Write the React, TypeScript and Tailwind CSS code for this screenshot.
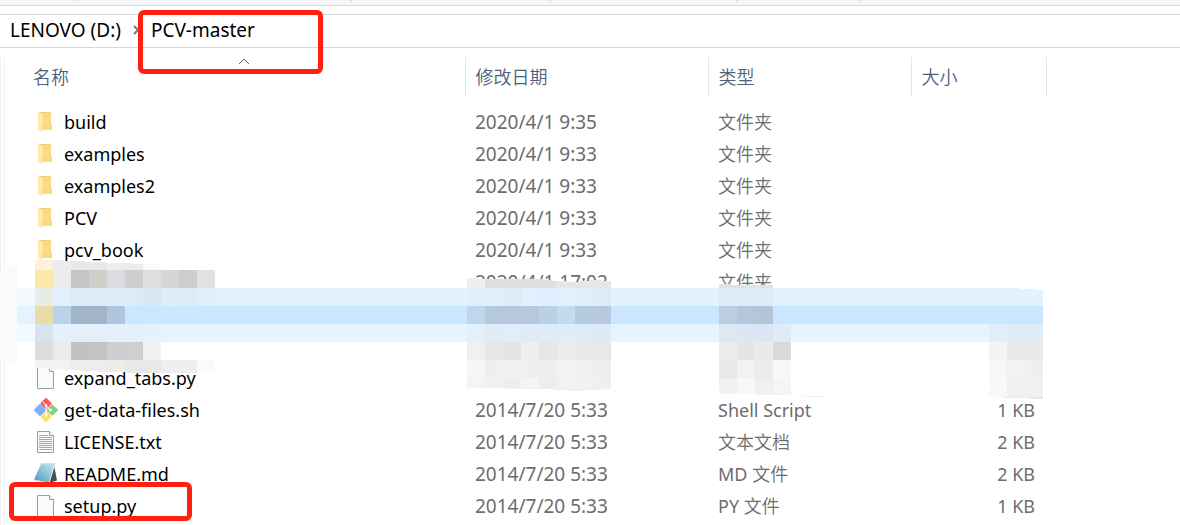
type IconKind = 'folder' | 'blank' | 'text' | 'git' | 'notepad' | 'none';

type FileRow = {
  id: number;
  icon: IconKind;
  name: string;
  date: string;
  type: string;
  size: string;
};

const rows: FileRow[] = [
  { id: 1, icon: 'folder', name: 'build', date: '2020/4/1 9:35', type: '文件夹', size: '' },
  { id: 2, icon: 'folder', name: 'examples', date: '2020/4/1 9:33', type: '文件夹', size: '' },
  { id: 3, icon: 'folder', name: 'examples2', date: '2020/4/1 9:33', type: '文件夹', size: '' },
  { id: 4, icon: 'folder', name: 'PCV', date: '2020/4/1 9:33', type: '文件夹', size: '' },
  { id: 5, icon: 'folder', name: 'pcv_book', date: '2020/4/1 9:33', type: '文件夹', size: '' },
  { id: 6, icon: 'none', name: '', date: '2020/4/1 17:02', type: '文件夹', size: '' },
  { id: 7, icon: 'none', name: '', date: '', type: '', size: '' },
  { id: 8, icon: 'none', name: '', date: '', type: '', size: '' },
  { id: 9, icon: 'blank', name: 'expand_tabs.py', date: '', type: '', size: '' },
  { id: 10, icon: 'git', name: 'get-data-files.sh', date: '2014/7/20 5:33', type: 'Shell Script', size: '1 KB' },
  { id: 11, icon: 'text', name: 'LICENSE.txt', date: '2014/7/20 5:33', type: '文本文档', size: '2 KB' },
  { id: 12, icon: 'notepad', name: 'README.md', date: '2014/7/20 5:33', type: 'MD 文件', size: '2 KB' },
  { id: 13, icon: 'blank', name: 'setup.py', date: '2014/7/20 5:33', type: 'PY 文件', size: '1 KB' },
];

// pixelated strips: x, y, height, then one colour per 18px cell
const strips: [number, number, number, string][] = [
  [35, 270, 18, 'fce7ab eeecea c3c6c5 d0cec9 dadce0 cfcecc dddedf d5d6d8 cbcecd e1e1e1'],
  [17, 288, 18, 'f2f9ff e7ede4 e0f0fe deebf7 deebf7 deebf8 dcebf7 d9e7f4 dfedf9 dcebf8 e0effb'],
  [17, 306, 18, 'e5f2ff e9dca8 bbd2e8 a0b5cc a0b5cc b0c6de'],
  [17, 324, 18, 'f2f9ff d8e4ed e2f1fc e3f0fa e3f0fa e4f1fc e4f0fc e5f1fd'],
  [35, 342, 18, 'dcdddd ecebe9 c2c2c2 c4c3c2 cccecf cfcfcf eff1f3'],
  [467, 288, 18, 'e0effb e0effb dcecf6 e2effd e0eefe e1f0fd e1effc dcecf6'],
  [467, 306, 18, 'bdd8ec b4cadc b5c8dc b4c8e0 b9d0e6 c3daf1 b5cce0 b5cae0'],
  [467, 324, 18, 'e1f0fa e0edf7 e0edfb dfecf7 dfecf9 dfecfa deebf8 dce9f8'],
  [467, 342, 18, 'f0f0f0 e9e7e5 e3e4e6 edefed e6e6e6 eeecea eaeaea e7e9e8'],
  [467, 360, 18, 'f6f6f6 f1eeeb f0f1f5 efefef eeeeee f2f2f2 f0f0f0 efefef'],
  [467, 378, 10, 'f4f4f4 f2f0ee eeeeee f3f5f4 ededed f2f2f2 f2f2f2 efefef'],
  [719, 288, 18, 'deecf8 deecf8 deecf8'],
  [719, 306, 18, 'b9cde3 b2c7dc b2c6da'],
  [719, 324, 18, 'dce9f3 dbe8f3 dae6f5 dfecf5'],
  [719, 342, 18, 'ebebeb e5e5e5 eaeaea d9d9d9'],
  [719, 360, 18, 'e8e8e6 f2f2f2 ececec f8f8f8'],
  [719, 378, 16, 'eff2f1 f7f7f4 eef1f0 f5f5f5'],
  [989, 324, 18, 'e1edfc dfecf8 dfecf5'],
  [989, 342, 18, 'f4f4f4 e9e9e9 e9e9e9'],
  [989, 360, 18, 'f7f7f7 f2f2f2 efefef'],
  [989, 378, 19, 'f9f9f9 f0f0f0 f0f0f0'],
];

function Mosaic() {
  return (
    <svg
      className="absolute left-0 top-0 pointer-events-none"
      width="1060"
      height="410"
      viewBox="0 0 1060 410"
      shapeRendering="crispEdges"
      aria-hidden="true"
    >
      <path d="M0 274C3 269 9 266 17 264V365C10 363 4 360 0 356Z" fill="#fafafa" />
      {/* torn upper and lower edges */}
      <path d="M35 260H53V270H35Z" fill="#fff2dc" />
      <path d="M53 260L95 262L143 264V270H53Z" fill="#ebeced" />
      <path d="M71 261L95 262L107 263V270H71Z" fill="#e7e9e9" />
      <path d="M143 264H161V270H143Z" fill="#f9fafa" />
      <path d="M35 360H71V370L35 368Z" fill="#f2f2f2" />
      <path d="M71 360H107V372L71 370Z" fill="#ededed" />
      <path d="M107 360H125V372H107Z" fill="#efebe6" />
      <path d="M125 360H161V373H125Z" fill="#e8e8e8" />
      <path d="M161 360H197V373H161Z" fill="#eeeeee" />
      <path d="M197 360H215V373H197Z" fill="#fafafa" />
      <path d="M467 278L485 279V288H467Z" fill="#efefef" />
      <path d="M485 279H539L557 281V288H485Z" fill="#e0e0e0" />
      <path d="M557 281L575 282L593 280L611 281V288H557Z" fill="#e6e6e6" />
      <path d="M719 284L745 285H773V288H719Z" fill="#e2e2e2" />
      <path d="M467 388H611V389L575 391L545 389Z" fill="#f0f0f0" />
      <path d="M989 397H1043V399Z" fill="#e8e8e8" />
      <path d="M745 394H791V395H770Z" fill="#f2f2f2" />
      <path d="M801 396H827V397H801Z" fill="#f2f2f2" />
      {/* highlighted row */}
      <path d="M17 288H1012L1043 290V306H17Z" fill="#e4f2fe" />
      <path d="M17 306H1043V324H17Z" fill="#cbe7ff" />
      <path d="M17 324H1043V342H17Z" fill="#e7f3ff" />
      {strips.map(([x, y, h, colours]) =>
        colours.split(' ').map((c, i) => (
          <rect key={`${x}-${y}-${i}`} x={x + i * 18} y={y} width="18" height={h} fill={`#${c}`} />
        )),
      )}
    </svg>
  );
}

function FileIcon({ kind }: { kind: IconKind }) {
  if (kind === 'none') return null;
  return (
    <svg className="shrink-0 overflow-visible" width="24" height="24" viewBox="0 0 24 24" aria-hidden="true">
      {kind === 'folder' && (
        <>
          <path d="M5 2H18V14L19 15V20H9V4Z" fill="#f0cb74" />
          <path d="M10 3H18V14L19 15V20H9.5V17Z" fill="#f8d984" />
          <path d="M5 2L10 5V15L9 16.5V22.5L5 20Z" fill="#ffe8a8" />
        </>
      )}
      {(kind === 'blank' || kind === 'text') && (
        <>
          <path d="M4.5 1.5H16.5L20.5 5.5V22.5H4.5Z" fill="#fafafa" stroke="#9c9c9c" />
          <path d="M16.5 1.5V5.5H20.5" fill="#fff" stroke="#9c9c9c" />
        </>
      )}
      {kind === 'text' && (
        <path
          d="M6 5.5H15M6 7.5H19M6 9.5H19M6 11.5H19M6 13.5H19M6 15.5H19M6 17.5H19M6 19.5H19"
          stroke="#a8a8a8"
        />
      )}
      {kind === 'git' && (
        <>
          <g strokeWidth="2" strokeLinejoin="round">
            <path d="M13 1L17.5 5.5L13 10L8.5 5.5Z" fill="#fb5a57" stroke="#fb5a57" />
            <path d="M7 7L12 12L7 17L2 12Z" fill="#7fb0fa" stroke="#7fb0fa" />
            <path d="M19 7.500L24 12L19 16.500L14.500 12Z" fill="#84d188" stroke="#84d188" />
            <path d="M13 14L17.5 18.5L13 23L8.5 18.5Z" fill="#fde05c" stroke="#fde05c" />
          </g>
          <path d="M10 4L13 7.500V17M13 7.500L17 12" stroke="#fff" strokeWidth="1" fill="none" />
          <circle cx="13" cy="7.500" r="1.300" fill="#fff" />
          <circle cx="17.500" cy="12" r="1.500" fill="#fff" />
          <circle cx="13" cy="17" r="1.500" fill="#fff" />
        </>
      )}
      {kind === 'notepad' && (
        <>
          <defs>
            <linearGradient id="pad" x1="0" y1="1" x2="1" y2="0">
              <stop offset="0" stopColor="#4d96b3" />
              <stop offset="0.45" stopColor="#7fbfd3" />
              <stop offset="1" stopColor="#c6e7ef" />
            </linearGradient>
          </defs>
          <path d="M21 3L24 18.5L16 21Z" fill="#474f54" />
          <path d="M8 2H22L16 21L1 17.5Z" fill="url(#pad)" />
          <path d="M1 17.5L16 21L16.5 22L2 19Z" fill="#d4e2e8" />
          <path d="M8 2H22" stroke="#c6d6da" strokeWidth="1.5" />
          <path d="M22 2L16 21" stroke="#e2edf0" />
        </>
      )}
    </svg>
  );
}

// Chinese glyphs are drawn a step lighter than the Latin ones
function TypeLabel({ text }: { text: string }) {
  const latin = text.match(/^[A-Za-z ]*/)?.[0] ?? '';
  return (
    <>
      {latin}
      <span className="font-[350]">{text.slice(latin.length)}</span>
    </>
  );
}

const columns = ['名称', '修改日期', '类型', '大小'];

export default function App() {
  return (
    <div className="relative flex min-h-screen flex-col overflow-hidden bg-white text-lg leading-6 text-black font-['Noto_Sans','Noto_Sans_CJK_SC',sans-serif]">
      <div className="flex h-1.5 items-start border-b border-[#dadbdc] bg-[#f5f6f7]">
        <div className="h-0.5 w-[78px] border-r border-[#dcdddf]" />
        <div className="h-0.5 w-[274px] border-r border-[#dcdddf]" />
        <div className="h-0.5 w-[199px] border-r border-[#dcdddf]" />
        <div className="h-0.5 w-[186px] border-r border-[#dcdddf]" />
        <div className="h-0.5 w-[124px] border-r border-[#dcdddf]" />
      </div>

      <nav className="mt-2 flex h-[34px] items-center border-y border-[#d9d9d9] pb-0.5 pl-2.5 text-[19px]">
        <button type="button">LENOVO (D:)</button>
        <svg className="mx-[11px] shrink-0" width="8" height="12" viewBox="0 0 8 12" aria-hidden="true">
          <path d="M2 2L6 6L2 10" fill="none" stroke="#777" strokeWidth="2" />
        </svg>
        <button type="button">PCV-master</button>
      </nav>

      <main className="mt-[9px] flex grow">
        <div className="w-[5px] shrink-0 border-x border-[#f1f1f1]" />
        <table className="ml-[18px] w-full table-fixed self-start border-collapse">
          <colgroup>
            <col className="w-[442px]" />
            <col className="w-[243px]" />
            <col className="w-[203px]" />
            <col className="w-[135px]" />
            <col />
          </colgroup>
          <thead>
            <tr className="h-10">
              {columns.map((label, i) => (
                <th
                  key={label}
                  className="relative border-r border-[#e5e5e5] p-0 pl-2.5 text-left font-[350] text-[#4c607a]"
                >
                  <button type="button">{label}</button>
                  {i === 0 && (
                    <svg
                      className="absolute left-1/2 top-0 -translate-x-1/2"
                      width="12"
                      height="8"
                      viewBox="0 0 12 8"
                      aria-hidden="true"
                    >
                      <path d="M1 7L6 2L11 7" fill="none" stroke="#666" />
                    </svg>
                  )}
                </th>
              ))}
              <th className="p-0" />
            </tr>
          </thead>
          <tbody className="before:block before:h-[9px]">
            {rows.map((row) => (
              <tr key={row.id} className="h-8 text-[#6d6d6d]">
                <td className="p-0 pl-2.5 text-black">
                  <div className="flex items-center gap-[7px]">
                    <FileIcon kind={row.icon} />
                    <span>{row.name}</span>
                  </div>
                </td>
                <td className="p-0 pl-2.5 text-[19px]">{row.date}</td>
                <td className="p-0 pl-2.5">
                  <TypeLabel text={row.type} />
                </td>
                <td className="p-0 pr-[11px] text-right">{row.size}</td>
                <td className="p-0" />
              </tr>
            ))}
          </tbody>
        </table>
      </main>

      <Mosaic />

      {/* red markers */}
      <div className="pointer-events-none absolute left-[138px] top-[10px] h-16 w-[185px] rounded-md border-[5px] border-[#ff2012]" />
      <div className="pointer-events-none absolute left-[9px] top-[482px] h-[39px] w-[183px] rounded-md border-[5px] border-[#ff2012]" />
    </div>
  );
}
